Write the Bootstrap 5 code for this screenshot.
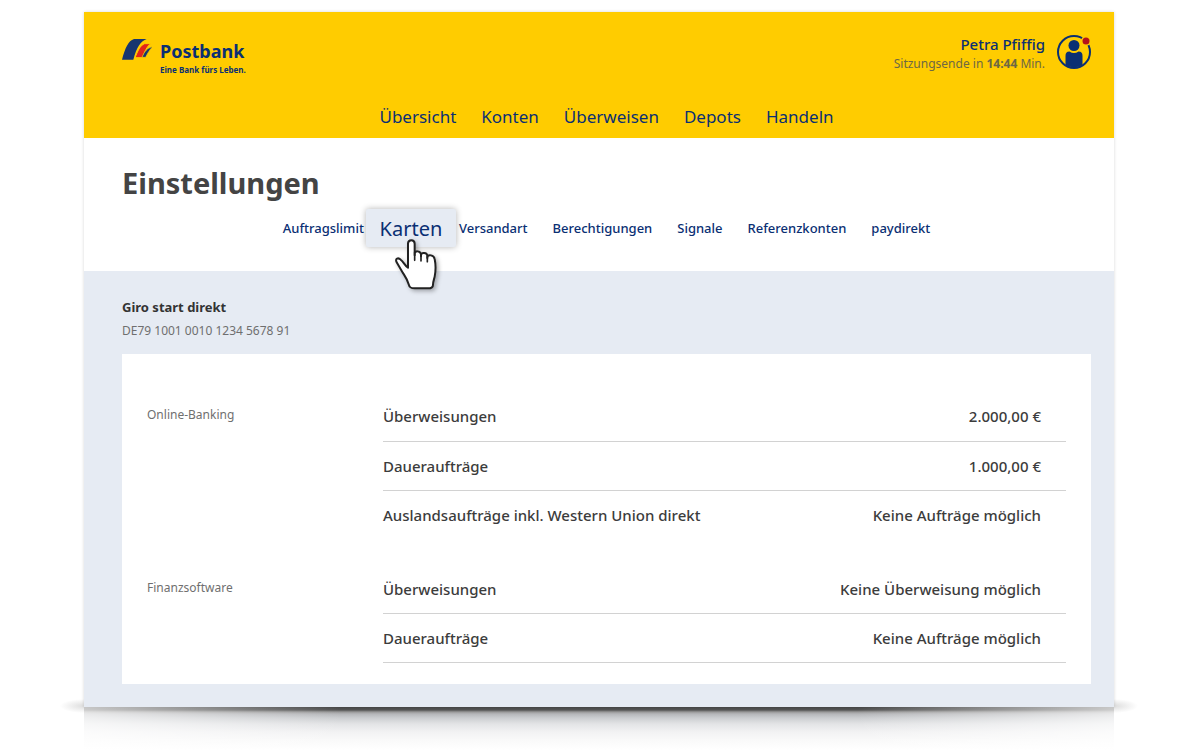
<!DOCTYPE html>
<html lang="de">
<head>
<meta charset="utf-8">
<meta name="viewport" content="width=device-width, initial-scale=1">
<title>Postbank – Einstellungen</title>
<link rel="stylesheet" href="https://cdn.jsdelivr.net/npm/bootstrap@5.3.0/dist/css/bootstrap.min.css">
<style>
  :root { --pb-yellow: #fc0; --pb-blue: #0a2f73; --pb-mist: #e6ebf3; --pb-ink: #3c3c3c; --pb-grey: #6f6f6f; }
  body { font-family: "Noto Sans", "Open Sans", sans-serif; font-size: 15px; color: var(--pb-ink); background: #fff; }
  a { color: var(--pb-blue); text-decoration: none; }
  .page-frame { margin: 12px 86px 0 84px; box-shadow: 0 0 3px rgba(0,0,0,.16); position: relative; background: #fff; }
  .gutter { padding-left: 38px; padding-right: 23px; }
  .masthead { background: var(--pb-yellow); height: 126px; }
  .masthead-top { padding-top: 22px; }
  .brand { padding-top: 4px; }
  .brand-name { font-size: 18px; line-height: 26px; font-weight: 700; }
  .brand-claim { font-size: 8px; line-height: 12px; font-weight: 700; }
  .user-name { font-size: 15px; line-height: 20px; font-weight: 500; }
  .session { font-size: 12px; line-height: 20px; color: #6d6845; }
  .profile { margin-right: -1px; }
  .main-nav { gap: 25px; font-size: 17px; line-height: 24px; padding-bottom: 9px; }
  .title-band { height: 133px; padding-top: 24px; }
  .title-band h1 { font-size: 29px; line-height: 42px; font-weight: 700; color: #444; }
  .sub-nav { gap: 25px; font-size: 13px; line-height: 20px; font-weight: 500; margin-top: 14px; }
  .zoom-slot { width: 45px; }
  .zoom-link { left: -23px; top: -9px; width: 90px; height: 38px; line-height: 39px; font-size: 20px; font-weight: 400; background: var(--pb-mist); box-shadow: 0 0 6px rgba(0,0,0,.3); border-radius: 2px; z-index: 1; }
  .hand { left: 4px; top: 19px; z-index: 2; filter: drop-shadow(2px 2px 2px rgba(0,0,0,.3)); pointer-events: none; }
  .account { background: var(--pb-mist); padding-top: 25px; padding-bottom: 23px; }
  .account h2 { font-size: 13px; line-height: 22px; font-weight: 700; color: #333; }
  .iban { font-size: 12px; line-height: 26px; color: var(--pb-grey); }
  .limits { background: #fff; margin-top: 10px; padding: 38px 25px 21px; }
  .limit-group + .limit-group { margin-top: 25px; }
  .limit-label { flex: 0 0 236px; font-size: 12px; line-height: 45px; font-weight: 400; color: var(--pb-grey); }
  .limit-table { line-height: 24px; }
  .limit-table th, .limit-table td { height: 49px; padding: 0; vertical-align: middle; font-weight: 500; border-bottom: 1px solid #d2d2d2; }
  .limit-table td { padding-right: 25px; text-align: right; }
  .limit-table .open-end > * { border-bottom-color: transparent; }
  .reflection { position: relative; height: 43px; margin: 0 86px 0 84px; overflow: hidden;
    background: linear-gradient(90deg, rgba(255,255,255,.7), rgba(255,255,255,0) 25%, rgba(255,255,255,0) 75%, rgba(255,255,255,.7)),
                linear-gradient(#444 0, #555 3px, #999 5px, #b6b7ba 7px, #ccced1 11px, #e3e4e6 17px, #f2f2f3 25px, #fafafa 34px, #fff 43px); }
  .foot-glow { left: -24px; right: -24px; bottom: -6px; height: 14px; z-index: -1;
    background: radial-gradient(closest-side, #ddd, #fff0) left / 48px 14px no-repeat, radial-gradient(closest-side, #ddd, #fff0) right / 48px 14px no-repeat; }
</style>
</head>
<body>
<div class="page-frame">
  <div class="foot-glow position-absolute"></div>
  <header class="masthead gutter d-flex flex-column justify-content-between">
    <div class="masthead-top d-flex justify-content-between align-items-start">
      <a href="#" class="brand d-flex gap-2">
        <svg width="30" height="24" viewBox="0 0 90 72" aria-hidden="true">
          <path fill="#17366f" d="M0 65C9 31 19 8 36 3h38C57 9 44 27 34 65Z"/>
          <path fill="#e1251b" stroke="#fc0" stroke-width="3" d="M38 62C47 39 54 22 68 17h18C76 24 68 40 61 59H38Z"/>
          <path fill="#17366f" stroke="#fc0" stroke-width="2" d="M60 58C67 42 74 30 92 26 84 35 77 44 71 58Z"/>
        </svg>
        <span class="d-flex flex-column"><span class="brand-name">Postbank</span><span class="brand-claim">Eine Bank fürs Leben.</span></span>
      </a>
      <div class="d-flex align-items-start gap-2">
        <div class="text-end">
          <a href="#" class="user-name d-block">Petra Pfiffig</a>
          <div class="session">Sitzungsende in <b>14:44</b> Min.</div>
        </div>
        <button type="button" class="profile btn p-0 border-0 d-flex ms-1" aria-label="Profil">
          <svg width="35" height="36" viewBox="0 0 35 36" aria-hidden="true">
            <circle cx="17" cy="18" r="16" fill="none" stroke="#0a2f73" stroke-width="2"/>
            <circle cx="29" cy="7" r="5" fill="#fc0"/><circle cx="29" cy="7" r="3.5" fill="#b5121b"/>
            <circle cx="17" cy="11.5" r="5.5" fill="#0a2f73"/>
            <path fill="#0a2f73" d="M8.500 31v-9c0-3 1-4.500 4-4.500 3 2 6 2 9 0 3 0 4 1.500 4 4.500v9c-5 3-12 3-17 0Z"/>
          </svg>
        </button>
      </div>
    </div>
    <nav aria-label="Hauptnavigation">
      <ul class="main-nav list-unstyled d-flex justify-content-center mb-0">
        <li><a href="#">Übersicht</a></li><li><a href="#">Konten</a></li><li><a href="#">Überweisen</a></li><li><a href="#">Depots</a></li><li><a href="#">Handeln</a></li>
      </ul>
    </nav>
  </header>

  <section class="title-band gutter">
    <h1 class="mb-0">Einstellungen</h1>
    <nav aria-label="Einstellungen">
      <ul class="sub-nav list-unstyled d-flex justify-content-center mb-0">
        <li><a href="#">Auftragslimit</a></li>
        <li class="zoom-slot position-relative">
          <a href="#" class="zoom-link position-absolute text-center" aria-current="page">Karten</a>
          <svg class="hand position-absolute" width="48" height="56" viewBox="128 110 144 168" aria-hidden="true">
            <path fill="#fff" stroke="#222" stroke-width="6" stroke-linejoin="round" stroke-linecap="round" d="M173 200V130c0-14 20-14 20 0v35-5c0-10 17-9 19 2v6-4c1-9 18-8 19 2v7-3c2-9 20-6 22 6 4 20 3 38 0 53-2 9-5 15-5 24 0 8-6 11-15 11h-40c-12 0-16-3-18-12-4-16-11-24-19-37l-17-29c-6-12 5-15 12-8 9 7 12 18 22 24Z"/>
            <path fill="none" stroke="#222" stroke-width="5" stroke-linecap="round" d="M193 156v24M212 162v20M231 169v15"/>
          </svg>
        </li>
        <li><a href="#">Versandart</a></li><li><a href="#">Berechtigungen</a></li><li><a href="#">Signale</a></li><li><a href="#">Referenzkonten</a></li><li><a href="#">paydirekt</a></li>
      </ul>
    </nav>
  </section>

  <main class="account gutter">
    <h2 class="mb-0">Giro start direkt</h2>
    <div class="iban">DE79 1001 0010 1234 5678 91</div>
    <div class="limits">
      <section class="limit-group d-flex">
        <h3 class="limit-label mb-0" id="g1">Online-Banking</h3>
        <table class="limit-table w-100" aria-labelledby="g1">
          <tbody>
            <tr><th scope="row">Überweisungen</th><td>2.000,00 €</td></tr>
            <tr><th scope="row">Daueraufträge</th><td>1.000,00 €</td></tr>
            <tr class="open-end"><th scope="row">Auslandsaufträge inkl. Western Union direkt</th><td>Keine Aufträge möglich</td></tr>
          </tbody>
        </table>
      </section>
      <section class="limit-group d-flex">
        <h3 class="limit-label mb-0" id="g2">Finanzsoftware</h3>
        <table class="limit-table w-100" aria-labelledby="g2">
          <tbody>
            <tr><th scope="row">Überweisungen</th><td>Keine Überweisung möglich</td></tr>
            <tr><th scope="row">Daueraufträge</th><td>Keine Aufträge möglich</td></tr>
          </tbody>
        </table>
      </section>
    </div>
  </main>
</div>
<div class="reflection"></div>
<script src="https://cdn.jsdelivr.net/npm/bootstrap@5.3.0/dist/js/bootstrap.bundle.min.js"></script>
</body>
</html>
